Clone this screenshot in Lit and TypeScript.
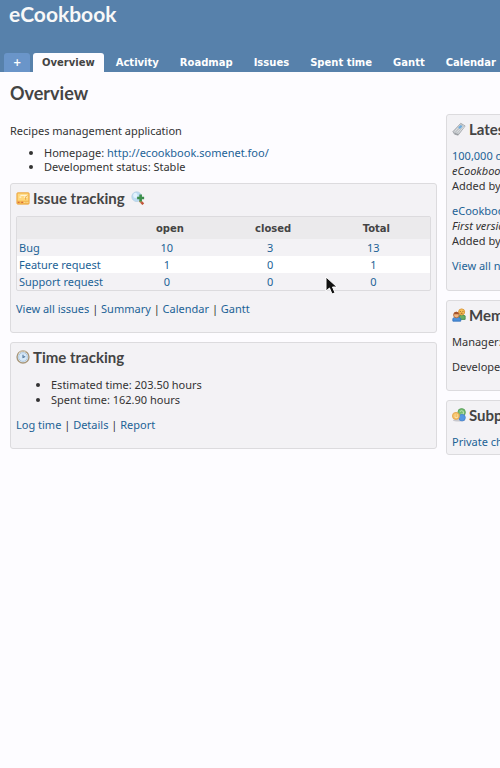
import { LitElement, html, css, svg } from "lit";
import { customElement } from "lit/decorators.js";

const icons = {
  ticket: svg`
    <rect x="1" y="2" width="14" height="13" rx="1" fill="#f3b94f" stroke="#eda847"/>
    <rect x="2" y="3" width="12" height="8" fill="#ffd77c"/>
    <path d="M5 5h8M4 7h2M9 7h4" stroke="#fff3d4" stroke-width="1.5"/>
    <path d="M11 10V7l2-2" fill="none" stroke="#e6a03c"/>
    <path d="M2 13h2M6 13h2" stroke="#d9693f" stroke-width="1.5"/>
    <path d="M9 13h5" stroke="#fff0c4" stroke-dasharray="1 1"/>`,
  zoom: svg`
    <path d="M10 11l4 4" stroke="#c58a55" stroke-width="3"/>
    <circle cx="6.500" cy="6.500" r="5.500" fill="#bddcf3" stroke="#b4cfe4"/>
    <ellipse cx="5" cy="5" rx="2.500" ry="3" fill="#e2f2fd"/>
    <path d="M9.500 4h3v2.500h2.500v3h-2.500v2.500h-3v-2.500h-2.500v-3h2.500z" fill="#3c8f4c"/>
    <path d="M12 13l2 2" stroke="#c54b3e" stroke-width="2"/>`,
  clock: svg`
    <circle cx="8" cy="8" r="6.800" fill="#e4f0fb" stroke="#a8977a" stroke-width="1.600"/>
    <circle cx="8" cy="8" r="5" fill="#d7e9f8" stroke="#a9c4da"/>
    <path d="M8 5.500v3l2.500-1" fill="none" stroke="#496f93" stroke-width="1.200"/>
    <path d="M3 4a6 6 0 0 1 8-2" fill="none" stroke="#ddd3bf"/>`,
  news: svg`
    <path d="M1 11L10 1.500l5 3L7 15l-4-1z" fill="#bfc3c7" stroke="#a2a6aa"/>
    <path d="M3 11l7-8M5 12l8-8M7 13l7-8" stroke="#dfe2e4"/>
    <path d="M7 6l3-2.500 2 1.500-3 3z" fill="#6bacdf"/>
    <path d="M3 13l4 1.500" stroke="#8f9499"/>`,
  group: svg`
    <path d="M8 13V9q3-3 7 0v4z" fill="#68ad64" stroke="#448b4c"/>
    <circle cx="11" cy="4.500" r="3.500" fill="#f7bf51" stroke="#d99338"/>
    <path d="M9 4h1M12 4h1M10 6h2" stroke="#8c5529"/>
    <path d="M1 15v-3q4-4 9 0v3z" fill="#4b91dc" stroke="#3472bd"/>
    <circle cx="5" cy="8" r="3.200" fill="#efb783" stroke="#b66d3f"/>
    <path d="M2 7q1-4 5-2l1 2z" fill="#a4532d"/>`,
  projects: svg`
    <ellipse cx="8" cy="14" rx="7" ry="1.500" fill="#c8c8ce"/>
    <circle cx="11" cy="5" r="4.300" fill="#76bd70" stroke="#599e5c"/>
    <path d="M9 4q2-2 4 0v3h-3" fill="none" stroke="#cce8ba"/>
    <circle cx="11.500" cy="11" r="3.700" fill="#5598e2" stroke="#4784ce"/>
    <circle cx="4.500" cy="9" r="4" fill="#f6c269" stroke="#e3a34d"/>
    <path d="M3 8h1M6 8h1M3 10q2 2 4 0" stroke="#fff1cc" fill="none"/>`,
};

const icon = (name: keyof typeof icons) =>
  html`<svg class="icon" viewBox="0 0 16 16" aria-hidden="true">${icons[name]}</svg>`;

const tabs = ["Overview", "Activity", "Roadmap", "Issues", "Spent time", "Gantt", "Calendar"];

const trackers: [string, number, number, number][] = [
  ["Bug", 10, 3, 13],
  ["Feature request", 1, 0, 1],
  ["Support request", 0, 0, 0],
];

const linkRow = (labels: string[]) => html`
  <p class="links">${labels.map((label, i) => html`${i ? " | " : ""}<a href="#">${label}</a>`)}</p>`;

@customElement("app-root")
export class AppRoot extends LitElement {
  static styles = css`
    :host {
      display: block;
      position: relative;
      min-height: 100vh;
      overflow: hidden;
      background: #fdfcff;
      color: #333;
      font: 11px/15px "Noto Sans", sans-serif;
    }
    a { color: #1c6296; text-decoration: none; }
    a:hover { text-decoration: underline; }
    h1, h2, h3 {
      margin: 0;
      font-family: Lato, sans-serif;
      font-weight: 700;
      color: #444;
    }
    p, ul { margin: 0; }
    header {
      display: flex;
      flex-direction: column;
      justify-content: space-between;
      height: 72px;
      background: #5781ab;
    }
    h1 { padding: 1px 9px; font-size: 21px; line-height: 26px; color: #f8f8f8; }
    nav { display: flex; gap: 3px; padding-left: 4px; white-space: nowrap; }
    .tab, .add {
      border: 0;
      border-radius: 3px 3px 0 0;
      padding: 1px 9px 0;
      font: bold 10px/18px "DejaVu Sans", sans-serif;
      color: #fff;
    }
    .add { width: 26px; background: #6a95c9; }
    .tab.selected { background: #fdfcff; color: #444; }
    main { width: 177%; box-sizing: border-box; padding: 9px 12px 0 10px; }
    h2 { font-size: 18px; line-height: 24px; }
    .columns { display: grid; grid-template-columns: 1fr 1fr; gap: 9px; }
    .intro { padding-top: 18px; }
    .facts { margin: 8px 0 9px; padding-left: 34px; line-height: 14px; }
    .side { padding-top: 9px; }
    .box {
      margin-bottom: 9px;
      border: 1px solid #dcdbde;
      border-radius: 3px;
      padding: 5px;
      background: #f3f2f5;
    }
    h3 { display: flex; align-items: center; gap: 3px; font-size: 15px; line-height: 18px; }
    .icon { width: 14px; height: 14px; flex: none; }
    .report { display: flex; margin-left: 3px; }
    table {
      width: 100%;
      margin: 9px 0 10px;
      border: 1px solid #dcdbde;
      border-radius: 2px;
      border-spacing: 0;
      table-layout: fixed;
    }
    th, td { padding: 1px 12px 1px 2px; text-align: center; line-height: 15px; }
    tbody th { padding-right: 2px; text-align: left; font-weight: normal; }
    thead th {
      padding: 4px 6px 3px 2px;
      background: #ebeaec;
      font: bold 10px/15px "DejaVu Sans", sans-serif;
      color: #444;
    }
    tbody tr:nth-child(even) { background: #fff; }
    .tracking, .time, .members { padding-bottom: 16px; }
    .news { padding-bottom: 17px; }
    .hours { margin: 11px 0 10px; padding-left: 35px; }
    .entry { margin-top: 10px; }
    .pointer { position: absolute; left: 325px; top: 276px; width: 13px; height: 19px; pointer-events: none; }
  `;

  render() {
    return html`
      <header>
        <h1>eCookbook</h1>
        <nav>
          <button class="add" aria-label="Add">+</button>
          ${tabs.map((tab, i) => html`<a href="#" class="tab ${i === 0 ? "selected" : ""}">${tab}</a>`)}
        </nav>
      </header>
      <main>
        <h2>Overview</h2>
        <div class="columns">
          <div>
            <p class="intro">Recipes management application</p>
            <ul class="facts">
              <li>Homepage: <a href="#">http://ecookbook.somenet.foo/</a></li>
              <li>Development status: Stable</li>
            </ul>
            <section class="box tracking">
              <h3>${icon("ticket")}Issue tracking<a class="report" href="#" aria-label="Report">${icon("zoom")}</a></h3>
              <table>
                <thead>
                  <tr><th></th><th scope="col">open</th><th scope="col">closed</th><th scope="col">Total</th></tr>
                </thead>
                <tbody>
                  ${trackers.map(([name, ...counts]) => html`<tr>
                    <th scope="row"><a href="#">${name}</a></th>
                    ${counts.map((n) => html`<td><a href="#">${n}</a></td>`)}
                  </tr>`)}
                </tbody>
              </table>
              ${linkRow(["View all issues", "Summary", "Calendar", "Gantt"])}
            </section>
            <section class="box time">
              <h3>${icon("clock")}Time tracking</h3>
              <ul class="hours">
                <li>Estimated time: 203.50 hours</li>
                <li>Spent time: 162.90 hours</li>
              </ul>
              ${linkRow(["Log time", "Details", "Report"])}
            </section>
          </div>
          <div class="side">
            <section class="box news">
              <h3>${icon("news")}Latest news</h3>
              <p class="entry"><a href="#">100,000 downloads</a><br><em>eCookbook downloads</em><br>Added by</p>
              <p class="entry"><a href="#">eCookbook</a><br><em>First version</em><br>Added by</p>
              <p class="entry"><a href="#">View all news</a></p>
            </section>
            <section class="box members">
              <h3>${icon("group")}Members</h3>
              <p class="entry">Manager:</p>
              <p class="entry">Developer:</p>
            </section>
            <section class="box">
              <h3>${icon("projects")}Subprojects</h3>
              <p class="entry"><a href="#">Private child</a></p>
            </section>
          </div>
        </div>
      </main>
      <svg class="pointer" viewBox="0 0 13 19" aria-hidden="true">
        <path d="M1 1v14l3.500-3 2.500 6 3-1.200-2.500-5.800H12z" fill="#111" stroke="#fff"/>
      </svg>
    `;
  }
}
